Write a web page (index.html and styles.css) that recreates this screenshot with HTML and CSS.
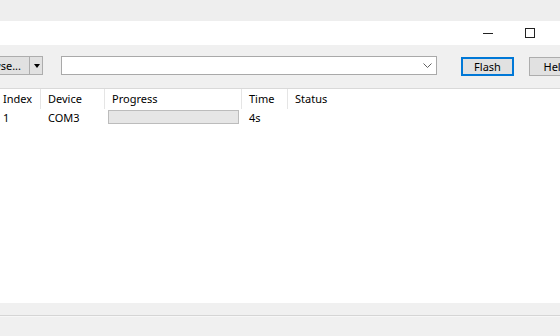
FILE: index.html
```html
<!DOCTYPE html>
<html>
<head>
    <meta charset="utf-8">
    <title>Flash</title>
    <link rel="stylesheet" href="styles.css">
</head>
<body>
  <div class='top_gap'></div>
  <div class='title_bar'>
    <span class='win_min'></span>
    <span class='win_max'></span>
  </div>
  <div class='tool_bar'>
    <div class='split_btn'>
      <span class='split_main'>Browse...</span>
      <span class='split_arrow'></span>
    </div>
    <div class='combo'>
      <svg class='combo_chev' width="9" height="5" viewBox="0 0 9 5"><path d="M0.5 0.5 L4.5 4.5 L8.5 0.5" fill="none" stroke="#606060" stroke-width="1"/></svg>
    </div>
    <div class='btn btn_default'>Flash</div>
    <div class='btn btn_help'>Help</div>
  </div>
  <div class='list_view'>
    <div class='list_row list_head'>
      <div class='cell first'>Index</div>
      <div class='cell'>Device</div>
      <div class='cell'>Progress</div>
      <div class='cell'>Time</div>
      <div class='cell last'>Status</div>
    </div>
    <div class='list_row'>
      <div class='cell first'>1</div>
      <div class='cell'>COM3</div>
      <div class='cell bar_cell'><div class='progress'></div></div>
      <div class='cell'>4s</div>
      <div class='cell last'></div>
    </div>
  </div>
  <div class='status_bar'>
    <div class='status_line'></div>
  </div>
</body>
</html>
```

FILE: styles.css
```css
      body{
        margin: 0;
        background-color: #eeeeee;
        font-family: "Segoe UI", "Noto Sans", "Open Sans", sans-serif;
        font-size: 11px;
        color: #000;
        overflow: hidden;
      }
      .top_gap{
        height: 21px;
      }
      .title_bar{
        height: 24px;
        background-color: #fff;
        display: flex;
        justify-content: flex-end;
        align-items: center;
        gap: 32px;
        padding-right: 25px;
      }
      .win_min{
        width: 10px;
        height: 1px;
        background-color: #222;
        margin-top: 1px;
      }
      .win_max{
        width: 8px;
        height: 8px;
        border: 1px solid #222;
      }
      .tool_bar{
        height: 32px;
        padding-top: 11px;
        background-color: #f0f0f0;
        display: flex;
        align-items: flex-start;
        margin-left: -40px;
        width: 640px;
      }
      .split_btn{
        display: flex;
        height: 19px;
        width: 83px;
        border: 1px solid #adadad;
        background-color: #e1e1e1;
        box-sizing: border-box;
      }
      .split_main{
        width: 69px;
        border-right: 1px solid #adadad;
        line-height: 17px;
        text-align: right;
        padding-right: 8px;
        box-sizing: border-box;
      }
      .split_arrow{
        flex: 1;
        position: relative;
      }
      .split_arrow::after{
        content: '';
        position: absolute;
        left: 4px;
        top: 7px;
        border-left: 3px solid transparent;
        border-right: 3px solid transparent;
        border-top: 4px solid #000;
      }
      .combo{
        margin-left: 18px;
        width: 376px;
        height: 19px;
        box-sizing: border-box;
        border: 1px solid #a9a9a9;
        background-color: #fff;
        display: flex;
        justify-content: flex-end;
        align-items: center;
        padding-right: 4px;
      }
      .btn{
        height: 19px;
        width: 53px;
        box-sizing: border-box;
        border: 1px solid #adadad;
        background-color: #e1e1e1;
        text-align: center;
        line-height: 17px;
      }
      .btn_default{
        margin-left: 24px;
        margin-top: 1px;
        border: 2px solid #0078d7;
        line-height: 15px;
      }
      .btn_help{
        margin-left: 15px;
        margin-top: 1px;
      }
      .list_view{
        height: 214px;
        background-color: #fff;
        border-top: 1px solid #d9d9d9;
      }
      .list_row{
        display: grid;
        grid-template-columns: 41px 64px 137px 46px 1fr;
        height: 17px;
        line-height: 17px;
      }
      .list_head{
        height: 20px;
        line-height: 20px;
      }
      .list_head .cell{
        border-right: 1px solid #e5e5e5;
      }
      .list_head .cell.last{
        border-right: none;
      }
      .cell{
        padding-left: 7px;
        white-space: nowrap;
        overflow: hidden;
        box-sizing: border-box;
      }
      .cell.first{
        padding-left: 3px;
      }
      .bar_cell{
        padding-left: 3px;
        padding-top: 1px;
      }
      .progress{
        width: 131px;
        height: 14px;
        box-sizing: border-box;
        border: 1px solid #bcbcbc;
        background-color: #e6e6e6;
      }
      .status_bar{
        height: 33px;
        background-color: #f0f0f0;
        padding-top: 12px;
        box-sizing: border-box;
      }
      .status_line{
        height: 1px;
        background-color: #d5d5d5;
        border-bottom: 1px solid #f7f7f7;
      }
```
